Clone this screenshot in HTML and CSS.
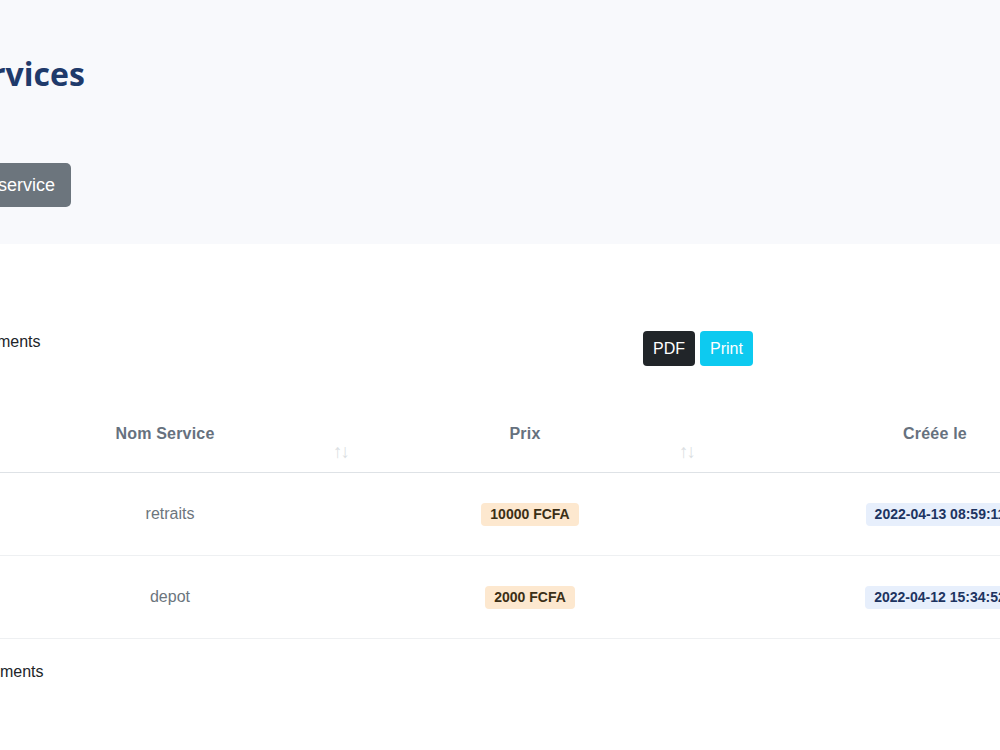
FILE: index.html
```html
<!DOCTYPE html>
<html lang="fr">
<head>
    <meta charset="UTF-8">
    <meta name="viewport" content="width=device-width, initial-scale=1.0">
    <title>Services</title>
    <link rel="stylesheet" href="styles.css">
</head>
<body>
    <div class="page">
        <div class="page-header">
            <h1>Les services</h1>
            <button class="btn btn-secondary">Ajouter un service</button>
        </div>

        <div class="content">
            <div class="controls">
                <div class="length">Afficher 10 éléments</div>
                <div class="buttons">
                    <button class="btn btn-dark">PDF</button>
                    <button class="btn btn-info">Print</button>
                </div>
            </div>

            <table class="data-table">
                <colgroup>
                    <col class="col-id">
                    <col class="col-name">
                    <col class="col-price">
                    <col class="col-date">
                </colgroup>
                <thead>
                    <tr>
                        <th>#<span class="sort">&uarr;&darr;</span></th>
                        <th class="th-name">Nom Service<span class="sort">&uarr;&darr;</span></th>
                        <th class="th-price">Prix<span class="sort">&uarr;&darr;</span></th>
                        <th>Créée le<span class="sort">&uarr;&darr;</span></th>
                    </tr>
                </thead>
                <tbody>
                    <tr>
                        <td>1</td>
                        <td>retraits</td>
                        <td><span class="badge badge-price">10000 FCFA</span></td>
                        <td><span class="badge badge-date">2022-04-13 08:59:11</span></td>
                    </tr>
                    <tr>
                        <td>2</td>
                        <td>depot</td>
                        <td><span class="badge badge-price">2000 FCFA</span></td>
                        <td><span class="badge badge-date">2022-04-12 15:34:52</span></td>
                    </tr>
                </tbody>
            </table>

            <div class="info">Nombre : 2 éléments</div>
        </div>
    </div>
</body>
</html>
```

FILE: styles.css
```css
body {
    margin: 0;
    font-family: "Liberation Sans", Arial, sans-serif;
    font-size: 16px;
    color: #212529;
    background-color: #fff;
    overflow: hidden;
}
/* la page est vue décalée vers la droite */
.page {
    margin-left: -300px;
    width: 1600px;
}
.page-header {
    background-color: #f8f9fc;
    height: 244px;
    box-sizing: border-box;
    padding: 55px 0 0 195px;
}
.page-header h1 {
    margin: 0 0 70px;
    font-family: "Open Sans", sans-serif;
    font-size: 32px;
    line-height: 38px;
    font-weight: 700;
    color: #1f3a6b;
}
.btn {
    font-family: "Liberation Sans", Arial, sans-serif;
    border: none;
    border-radius: 4px;
    color: #fff;
    cursor: pointer;
}
.btn-secondary {
    background-color: #6c757d;
    font-size: 18px;
    line-height: 24px;
    padding: 10px 16px;
    border-radius: 5px;
}
.btn-dark {
    background-color: #212529;
}
.btn-info {
    background-color: #0dcaf0;
}
.content {
    padding: 87px 0 0 195px;
}
.controls {
    display: flex;
    align-items: flex-start;
}
.length {
    flex: 0 0 748px;
    padding-top: 2px;
}
.buttons {
    display: flex;
    gap: 5px;
}
.buttons .btn {
    font-size: 16px;
    height: 35px;
    padding: 0 10px;
    min-width: 52px;
}
.data-table {
    margin-top: 44px;
    width: 1277px;
    border-collapse: collapse;
    table-layout: fixed;
}
.col-id { width: 93px; }
.col-name { width: 364px; }
.col-price { width: 356px; }
.col-date { width: 464px; }
.data-table th {
    padding: 14px 18px 12px 8px;
    font-size: 16px;
    line-height: 20px;
    font-weight: bold;
    letter-spacing: 0.2px;
    color: #66717e;
    text-align: center;
    border-bottom: 1px solid #dee2e6;
    vertical-align: top;
}
.data-table th .sort {
    display: block;
    text-align: right;
    margin-right: -10px;
    font-size: 19px;
    line-height: 16px;
    font-weight: normal;
    letter-spacing: -2px;
    color: #dcdfe3;
}
.data-table .th-name .sort {
    margin-right: -14px;
}
.data-table .th-price .sort {
    margin-right: -4px;
}
.data-table td {
    height: 82px;
    padding: 0 10px;
    text-align: center;
    vertical-align: middle;
    color: #6c757d;
    border-bottom: 1px solid #eef0f2;
}
.badge {
    display: inline-block;
    padding: 0 9px;
    font-size: 14px;
    line-height: 23px;
    font-weight: bold;
    border-radius: 4px;
}
.badge-price {
    background-color: #fde8cf;
    color: #3b2f16;
}
.badge-date {
    background-color: #e7effc;
    color: #1d3461;
}
.info {
    margin-top: 24px;
}
```
